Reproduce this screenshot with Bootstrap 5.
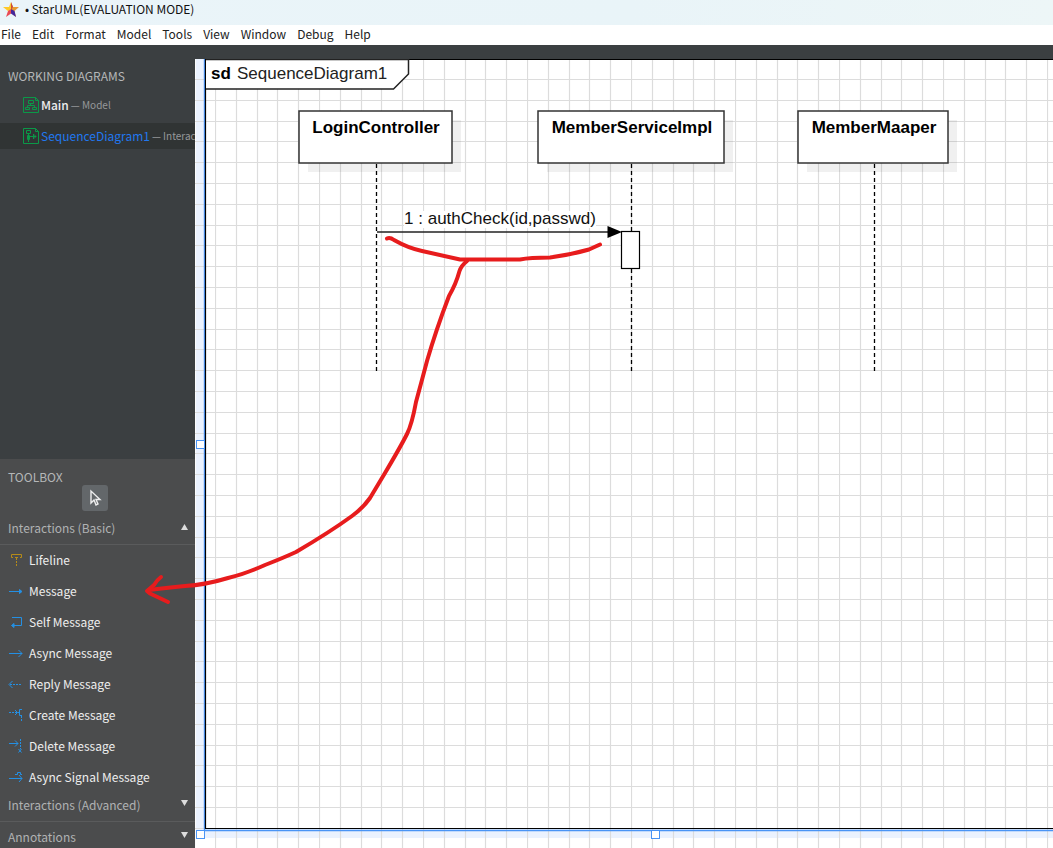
<!DOCTYPE html>
<html lang="en">
<head>
<meta charset="utf-8">
<meta name="viewport" content="width=device-width, initial-scale=1">
<title>StarUML</title>
<link href="https://cdn.jsdelivr.net/npm/bootstrap@5.3.0/dist/css/bootstrap.min.css" rel="stylesheet">
<style>
  body { background: #3b3f41; font-family: "Noto Sans CJK KR", sans-serif; font-size: 12px; line-height: 16px; }
  .titlebar { height: 25px; background: linear-gradient(90deg, #eaf4f9, #e9f4f8 60%, #edf6f7); color: #111; padding: 0 0 7px 3px; gap: 5px; }
  .menubar { height: 20px; background: #fff; padding: 0 0 2px 1px; gap: 11px; }
  .menubar a { color: #222; }
  .sidebar { width: 195px; }
  .diagrams { flex: 1 0 414px; padding-top: 23px; }
  .pane-title { color: #b5b7b8; font-weight: 400; font-size: 12px; line-height: 16px; padding-left: 8px; margin: 0 0 8px; }
  .diagram-link { height: 26px; margin-bottom: 5px; padding-left: 23px; gap: 2px; color: #eee; white-space: nowrap; overflow: hidden; }
  .diagram-link .kind { color: #96989a; font-size: 10px; }
  .diagram-link.active { background: #303434; color: #2178f0; }
  .toolbox { background: #4b4c4d; min-height: 0; overflow: hidden; padding-top: 10px; }
  .toolbox .pane-title { margin: 0; }
  .pointer-btn { width: 26px; height: 26px; border: 0; border-radius: 3px; background: #63676a; margin-left: 82px; padding: 0; }
  .group-btn { height: 34px; width: 100%; padding: 0 7px 0 8px; border: 0; border-bottom: 1px solid #5a5b5c; background: none; color: #b0b2b3; text-align: left; }
  .tools + .group-btn { height: 29px; padding-bottom: 4px; }
  .group-btn:last-child { height: 31px; }
  .tool-btn { height: 31px; padding: 0 0 1px 8px; border: 0; background: none; color: #eee; text-align: left; gap: 5px; }
  .tool-btn svg { stroke: #2490e4; fill: none; }
  .canvas-pane { margin-top: 14px; background: #fff; min-width: 0; overflow: hidden; }
  .canvas-pane text { font-family: "Liberation Sans", sans-serif; font-size: 17px; }
  .ink { position: absolute; left: 0; top: 0; pointer-events: none; }
</style>
</head>
<body class="vh-100 d-flex flex-column overflow-hidden position-relative">
<header>
  <div class="titlebar d-flex align-items-center">
    <svg width="17" height="17" viewBox="0 0 17 17" aria-hidden="true">
      <path d="M8 1 10 6 16 6 11.500 10 13 16 8 12Z" fill="#e79a32"/>
      <path d="M8 1 6 6 0 6 5 10 8 9Z" fill="#ffc928"/>
      <path d="M5 10 3 16 8 12.500 8 8Z" fill="#e94a55"/>
      <path d="M8 8 11.500 10 13 16 8 12.500Z" fill="#44279c"/>
      <path d="M8 1 10 6 8 9Z" fill="#cc4a3c"/>
    </svg>
    <span>• StarUML(EVALUATION MODE)</span>
  </div>
  <nav class="menubar d-flex align-items-center">
    <a class="text-decoration-none" href="#">File</a><a class="text-decoration-none" href="#">Edit</a><a class="text-decoration-none" href="#">Format</a><a class="text-decoration-none" href="#">Model</a><a class="text-decoration-none" href="#">Tools</a><a class="text-decoration-none" href="#">View</a><a class="text-decoration-none" href="#">Window</a><a class="text-decoration-none" href="#">Debug</a><a class="text-decoration-none" href="#">Help</a>
  </nav>
</header>
<main class="d-flex flex-fill overflow-hidden">
  <aside class="sidebar d-flex flex-column flex-shrink-0">
    <section class="diagrams">
      <h2 class="pane-title">WORKING DIAGRAMS</h2>
      <a class="diagram-link d-flex align-items-center text-decoration-none" href="#">
        <svg class="flex-shrink-0" width="16" height="16" viewBox="0 0 16 16" fill="none" stroke="#0b9848" aria-hidden="true"><path d="M.5.500H12.500L15.500 3.500V15.500H.5ZM12.500.500V3.500H15.500M5.500 3.500h5v3h-5ZM7.500 6.500v2M4.500 10.500V8.500h7V10.500M2.500 10.500h4v2h-4ZM9.500 10.500h4v2H9.500Z"/></svg>
        <span class="fw-medium">Main</span><span class="kind">— Model</span>
      </a>
      <a class="diagram-link active d-flex align-items-center text-decoration-none" href="#">
        <svg class="flex-shrink-0" width="16" height="16" viewBox="0 0 16 16" fill="none" stroke="#0b9848" aria-hidden="true"><path d="M.5.500H12.500L15.500 3.500V15.500H.5ZM12.500.500V3.500H15.500M3.500 2.500h4v3h-4ZM5.500 5.500V14M4.500 7.500h2v4h-2ZM7 8.500h6M10.500 6v5M11 6.500l2 2-2 2"/></svg>
        <span>SequenceDiagram1</span><span class="kind">— Interaction</span>
      </a>
    </section>
    <section class="toolbox">
      <h2 class="pane-title">TOOLBOX</h2>
      <button class="pointer-btn d-flex align-items-center justify-content-center" aria-label="Select">
        <svg width="14" height="18" viewBox="0 0 14 18" fill="none" stroke="#eee" stroke-width="1.400"><path d="M3 2V14L6 11 8 16 10 15 8 10.500H12Z"/></svg>
      </button>
      <button class="group-btn d-flex align-items-center justify-content-between">Interactions (Basic)<svg width="7" height="8" fill="#ddd"><path d="M3.500 0 7 6H0Z"/></svg></button>
      <div class="tools d-flex flex-column">
        <button class="tool-btn d-flex align-items-center"><svg width="16" height="16" style="stroke:#b58b19"><path d="M5 5.500H3.500V2.500H13.500V5.500H12M7 5.500h3"/><path d="M8.500 6V15" stroke-dasharray="2 1"/></svg>Lifeline</button>
        <button class="tool-btn d-flex align-items-center"><svg width="16" height="16"><path d="M1 8.500H13"/><path d="M11.500 6.500 14 8.500 11.500 10.500Z" fill="#2490e4"/></svg>Message</button>
        <button class="tool-btn d-flex align-items-center"><svg width="16" height="16"><path d="M4 3.500H13.500V11.500H5"/><path d="M6 9.500 3.500 11.500 6 13.500Z" fill="#2490e4"/></svg>Self Message</button>
        <button class="tool-btn d-flex align-items-center"><svg width="16" height="16"><path d="M1 8.500H14M10.500 5 14 8.500 10.500 12"/></svg>Async Message</button>
        <button class="tool-btn d-flex align-items-center"><svg width="16" height="16"><path d="M4.500 5 1 8.500 4.500 12"/><path d="M2 8.500H14" stroke-dasharray="2 1"/></svg>Reply Message</button>
        <button class="tool-btn d-flex align-items-center"><svg width="16" height="16"><path d="M1 5.500H9M13.500 9V15" stroke-dasharray="2 1"/><path d="M7 3 9.500 5.500 7 8M14 2.500H11.500V8.500H14M9.500 5.500h2"/></svg>Create Message</button>
        <button class="tool-btn d-flex align-items-center"><svg width="16" height="16"><path d="M1 5.500H10M7 2.500 10 5.500 7 8.500M10.500 11l3 3.500M13.500 11l-3 3.500"/><path d="M12.500 1V11" stroke-dasharray="2 1"/></svg>Delete Message</button>
        <button class="tool-btn d-flex align-items-center"><svg width="16" height="16"><path d="M1 9.500H14M11 6 14 9.500 11 13M7 5.500H9.500V3.500H12.500V5.500H14"/></svg>Async Signal Message</button>
      </div>
      <button class="group-btn d-flex align-items-center justify-content-between">Interactions (Advanced)<svg width="7" height="10" fill="#ddd"><path d="M0 0H7L3.500 6Z"/></svg></button>
      <button class="group-btn d-flex align-items-center justify-content-between">Annotations<svg width="7" height="10" fill="#ddd"><path d="M0 0H7L3.500 6Z"/></svg></button>
    </section>
  </aside>
  <section class="canvas-pane flex-fill" aria-label="Sequence diagram">
    <svg class="d-block" width="100%" height="100%">
      <defs>
        <pattern id="grid" width="104" height="104" x="215" y="79" patternUnits="userSpaceOnUse">
          <path d="M.5 0V104M21.500 0V104M42.500 0V104M62.500 0V104M83.500 0V104M0 .5H104M0 21.500H104M0 42.500H104M0 62.500H104M0 83.500H104" stroke="#dcdcdc" stroke-width="1.200"/>
        </pattern>
      </defs>
      <g transform="translate(-195 -59)">
        <path d="M196 59H205V829H3000V838H196Z" fill="#ebf2fe"/>
        <rect x="195" y="59" width="2800" height="2000" fill="url(#grid)"/>
        <path d="M204.500 59V830.500H3000" fill="none" stroke="#4a94f5" stroke-width="1.400"/>
        <path d="M205.500 59V828.500H3000M205 59.500H3000" fill="none" stroke="#000" stroke-width="1.200"/>
        <path d="M206 59.500H408.500V74L393.500 89H206" fill="#fff" stroke="#222" stroke-width="1.500"/>
        <text x="211" y="79" font-weight="bold">sd</text><text x="237" y="79" fill="#222">SequenceDiagram1</text>
        <g fill="#000" fill-opacity=".06"><rect x="308" y="120" width="153" height="52"/><rect x="547" y="120" width="186" height="52"/><rect x="807" y="120" width="150" height="52"/></g>
        <g fill="#fff" stroke="#333" stroke-width="1.500"><rect x="299" y="111" width="153" height="52"/><rect x="538" y="111" width="186" height="52"/><rect x="798" y="111" width="150" height="52"/></g>
        <g font-weight="bold" text-anchor="middle"><text x="376" y="133">LoginController</text><text x="632" y="133">MemberServiceImpl</text><text x="874" y="133">MemberMaaper</text></g>
        <path d="M376.500 164V371M631.500 164V371M874.500 164V371" stroke="#000" stroke-width="1.300" stroke-dasharray="4 3"/>
        <rect x="404" y="211" width="192" height="17" fill="#fff"/>
        <text x="500" y="224" text-anchor="middle" fill="#111">1 : authCheck(id,passwd)</text>
        <path d="M377 232H610" stroke="#222" stroke-width="1.500"/><path d="M607.500 226 622 232 607.500 238Z"/>
        <rect x="621.500" y="231.500" width="18" height="37" fill="#fff" stroke="#000" stroke-width="1.200"/>
        <g fill="#fff" stroke="#4a94f5"><rect x="196.500" y="440.500" width="8" height="8"/><rect x="196.500" y="830.500" width="8" height="8"/><rect x="651.500" y="830.500" width="8" height="8"/></g>
      </g>
    </svg>
  </section>
</main>
<svg class="ink" width="660" height="620" fill="none" stroke="#e71c1d" stroke-width="4" stroke-linecap="round" stroke-linejoin="round" aria-hidden="true">
  <path d="M387 238.500Q390 237 394 240Q408 248 422 251Q444 256 460 259.500H520Q530 257.500 550 257.500Q570 255 589 249.500L600 244.500"/>
  <path d="M467 261Q461 266 459.500 271Q456 284 449 296Q436 330 427 361Q422 380 416 402Q412 424 407 434Q401 446 385 473L370 498Q363 508 352 516Q330 532 296 552Q283 558 265 565Q245 574 228 578Q205 585 185 586Q165 588 149 590"/>
  <path d="M161 577Q157 580 154 585L147 591 150 593.500 168 602"/>
</svg>
<script src="https://cdn.jsdelivr.net/npm/bootstrap@5.3.0/dist/js/bootstrap.bundle.min.js"></script>
</body>
</html>
